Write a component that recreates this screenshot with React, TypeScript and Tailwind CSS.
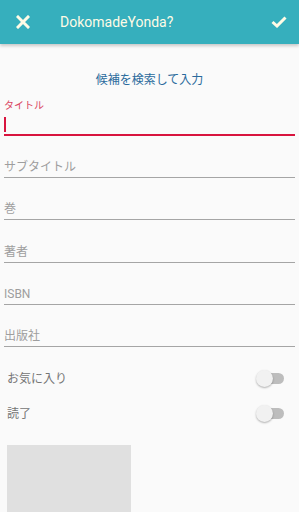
import React from 'react';

const FONT = 'font-[Roboto,"Noto_Sans_CJK_JP",sans-serif]';

// heights keep the underlines on the reference's rows
const fields = [
  { label: 'サブタイトル', h: 'h-[42px]' },
  { label: '巻', h: 'h-[42px]' },
  { label: '著者', h: 'h-[43px]' },
  { label: 'ISBN', h: 'h-[42px]' },
  { label: '出版社', h: 'h-[42px]' },
];

function Toggle() {
  return (
    <div className="relative w-[28px] h-[17px] flex items-center">
      <div className="absolute left-[6px] right-0 h-[11px] rounded-full bg-[#bdbdbd]" />
      <div className="absolute left-0 w-[17px] h-[17px] rounded-full bg-[#f1f1f1] shadow-[0_1px_2px_rgba(0,0,0,0.3)]" />
    </div>
  );
}

export default function App() {
  return (
    <div className={`${FONT} w-[299px] h-[512px] overflow-hidden bg-[#fafafa]`}>
      {/* App bar */}
      <header className="relative z-10 h-[44px] bg-[#36afbd] flex items-center shadow-[0_2px_3px_rgba(0,0,0,0.2)]">
        <div className="w-[60px] flex justify-center pr-[15px]">
          <svg width="14" height="14" viewBox="0 0 14 14" aria-hidden="true">
            <path d="M2 2 L12 12 M12 2 L2 12" stroke="#fffbe6" strokeWidth="3" strokeLinecap="square" />
          </svg>
        </div>
        <div className="flex-1 text-[14px] font-normal text-[#fffbe6]">DokomadeYonda?</div>
        <div className="w-[40px] flex justify-center">
          <svg width="16" height="12" viewBox="0 0 16 12" aria-hidden="true">
            <path d="M1.5 6 L6 10 L14.5 1.5" stroke="#fffbe6" strokeWidth="3" fill="none" />
          </svg>
        </div>
      </header>

      {/* Search candidates */}
      <div className="pt-[28px] text-center text-[12px] leading-[16px] text-[#2a6a9c]">候補を検索して入力</div>

      {/* Title (focused) */}
      <div className="px-[4px] mt-[12px]">
        <div className="text-[10px] leading-[12px] text-[#d9445f]">タイトル</div>
        <div className="h-[24px] flex items-end border-b-2 border-[#d8143e] pb-[2px]">
          <div className="w-[2px] h-[15px] bg-[#d8143e]" />
        </div>
      </div>

      {/* Other fields */}
      <div className="px-[4px]">
        {fields.map((f) => (
          <div key={f.label} className={`${f.h} flex items-end border-b border-[#a5a5a5] pb-[2px]`}>
            <span className="text-[12px] leading-[16px] text-[#9e9e9e]">{f.label}</span>
          </div>
        ))}
      </div>

      {/* Switches */}
      <div className="pl-[7px] pr-[15px] pt-[14px]">
        {['お気に入り', '読了'].map((l) => (
          <div key={l} className="h-[35px] flex items-center justify-between">
            <span className="text-[12px] text-[#757575]">{l}</span>
            <Toggle />
          </div>
        ))}
      </div>

      {/* Cover placeholder */}
      <div className="ml-[7px] mt-[14px] w-[124px] h-[100px] bg-[#e0e0e0]" />
    </div>
  );
}
